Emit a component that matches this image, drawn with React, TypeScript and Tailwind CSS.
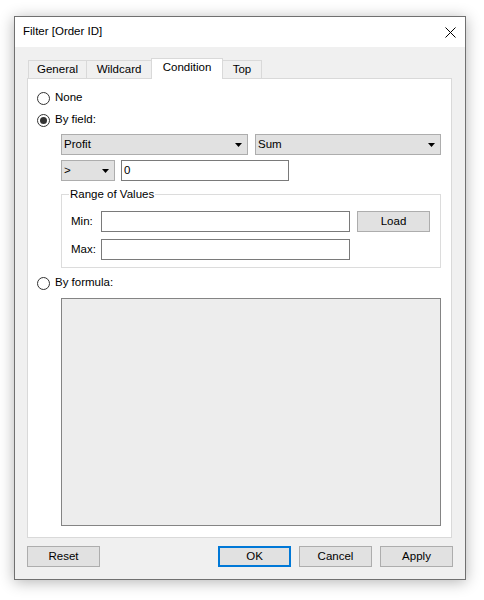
const font = { fontFamily: '"Liberation Sans", Arial, sans-serif' };

const Arrow = () => (
  <svg width="7" height="4" viewBox="0 0 7 4" className="shrink-0">
    <path d="M0 0h7L3.5 4z" fill="#000" />
  </svg>
);

const Radio = ({ checked, label }: { checked?: boolean; label: string }) => (
  <div className="flex items-center h-[22px]">
    <div className="w-[13px] h-[13px] rounded-full border border-[#333] bg-white flex items-center justify-center">
      {checked && <div className="w-[7px] h-[7px] rounded-full bg-[#333]" />}
    </div>
    <span className="ml-[5px]">{label}</span>
  </div>
);

const Select = ({ value, className }: { value: string; className: string }) => (
  <div className={`h-[21px] bg-[#e1e1e1] border border-[#adadad] flex items-center justify-between pl-[2px] pr-[5px] ${className}`}>
    <span>{value}</span>
    <Arrow />
  </div>
);

const Button = ({ label, primary }: { label: string; primary?: boolean }) => (
  <button
    className={`w-[73px] h-[21px] bg-[#e1e1e1] flex items-center justify-center ${
      primary ? 'border-2 border-[#0078d7]' : 'border border-[#adadad]'
    }`}
  >
    {label}
  </button>
);

export default function App() {
  const tabs = [
    { name: 'General', w: 'w-[59px]' },
    { name: 'Wildcard', w: 'w-[66px]' },
    { name: 'Condition', w: 'w-[72px]', active: true },
    { name: 'Top', w: 'w-[40px]' },
  ];

  return (
    <div className="min-h-screen bg-white pt-[16px] pl-[14px] text-[11.5px] text-black" style={font}>
      <div className="w-[452px] h-[564px] border border-[#707070] flex flex-col shadow-[0_2px_14px_rgba(0,0,0,0.3)]">
        {/* Title bar */}
        <div className="h-[30px] bg-white flex items-center justify-between pl-[8px] pr-[9px]">
          <span className="text-[11.5px]">Filter [Order ID]</span>
          <svg width="11" height="11" viewBox="0 0 11 11">
            <path d="M0.5 0.5l10 10M10.5 0.5l-10 10" stroke="#000" strokeWidth="1" />
          </svg>
        </div>

        {/* Body */}
        <div className="flex-1 bg-[#f0f0f0] px-[12px] pt-[11px]">
          {/* Tabs */}
          <div className="h-[20px] flex items-end pl-[1px]">
            {tabs.map((t) =>
              t.active ? (
                <div
                  key={t.name}
                  className={`${t.w} h-[21px] -mb-px -ml-px relative z-10 bg-white border border-b-0 border-[#d9d9d9] flex items-center justify-center pb-[2px]`}
                >
                  {t.name}
                </div>
              ) : (
                <div
                  key={t.name}
                  className={`${t.w} h-[18px] -ml-px first:ml-0 bg-[#f0f0f0] border border-b-0 border-[#d9d9d9] flex items-center justify-center`}
                >
                  {t.name}
                </div>
              )
            )}
          </div>

          {/* Panel */}
          <div className="w-[425px] h-[460px] bg-white border border-[#d9d9d9] pl-[9px] pr-[10px] pt-[8px]">
            <Radio label="None" />
            <Radio checked label="By field:" />

            <div className="pl-[24px]">
              <div className="mt-[3px] flex gap-[7px]">
                <Select value="Profit" className="w-[187px]" />
                <Select value="Sum" className="w-[186px]" />
              </div>

              <div className="mt-[5px] flex items-center gap-[6px] h-[21px]">
                <Select value=">" className="w-[54px] h-[20px]" />
                <div className="w-[168px] h-[21px] bg-white border border-[#7a7a7a] flex items-center pl-[2px]">0</div>
              </div>

              <fieldset className="mt-[6px] border border-[#dcdcdc] pl-[9px] pr-[10px] pb-[7px] m-0">
                <legend className="ml-[-2px] px-[1px] leading-[14px]">Range of Values</legend>
                <div className="mt-[10px] flex items-center h-[21px]">
                  <span className="w-[30px]">Min:</span>
                  <div className="w-[249px] h-[21px] bg-white border border-[#7a7a7a]" />
                  <div className="ml-auto">
                    <Button label="Load" />
                  </div>
                </div>
                <div className="mt-[7px] flex items-center h-[21px]">
                  <span className="w-[30px]">Max:</span>
                  <div className="w-[249px] h-[21px] bg-white border border-[#7a7a7a]" />
                </div>
              </fieldset>
            </div>

            <div className="mt-[4px]">
              <Radio label="By formula:" />
            </div>

            <div className="ml-[24px] mt-[4px] w-[380px] h-[228px] bg-[#ededed] border border-[#848484]" />
          </div>

          {/* Buttons */}
          <div className="mt-[8px] w-[426px] flex justify-between">
            <Button label="Reset" />
            <div className="flex gap-[8px]">
              <Button label="OK" primary />
              <Button label="Cancel" />
              <Button label="Apply" />
            </div>
          </div>
        </div>
      </div>
    </div>
  );
}
